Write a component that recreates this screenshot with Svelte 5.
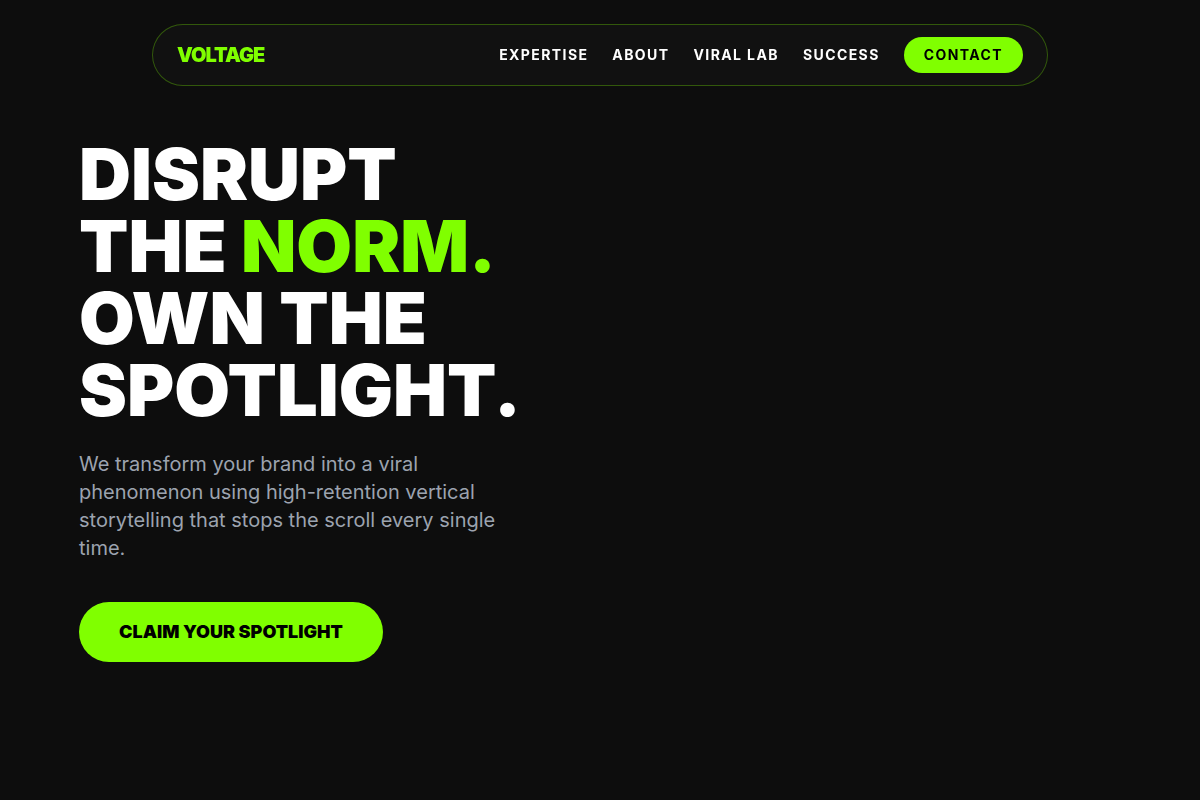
<script>
    const links = [
        { label: 'Expertise', href: '#expertise' },
        { label: 'About', href: '#about' },
        { label: 'Viral Lab', href: '#lab' },
        { label: 'Success', href: '#success' }
    ]
</script>

<nav>
    <a class="logo" href="#top">VOLTAGE</a>
    <div class="links">
        {#each links as link (link.href)}
            <a href={link.href}>{link.label}</a>
        {/each}
        <a class="contact" href="#contact">Contact</a>
    </div>
</nav>

<main id="top">
    <section class="hero">
        <div class="copy">
            <h1>Disrupt<br>the <span>norm.</span><br>Own the<br>Spotlight.</h1>
            <p>We transform your brand into a viral phenomenon using high-retention vertical storytelling that stops the scroll every single time.</p>
            <button type="button">Claim your spotlight</button>
        </div>
    </section>
</main>

<style>
    :global(body) {
        background: #0d0d0d;
        color: #fff;
        font-family: Inter, sans-serif;
    }
    nav {
        position: fixed;
        top: 24px;
        left: 0;
        right: 0;
        z-index: 10;
        box-sizing: border-box;
        width: calc(100% - 48px);
        max-width: 896px;
        margin: 0 auto;
        padding: 12px 24px;
        display: flex;
        align-items: center;
        justify-content: space-between;
        background: rgba(255, 255, 255, 0.02);
        border: 1px solid rgba(128, 255, 0, 0.3);
        border-radius: 32px;
    }
    nav a {
        color: #fff;
        text-decoration: none;
    }
    nav .logo {
        color: #80ff00;
        font-size: 20px;
        line-height: 28px;
        font-weight: 900;
        letter-spacing: -1px;
    }
    .links {
        display: flex;
        align-items: center;
        gap: 24px;
        font-size: 14px;
        line-height: 20px;
        font-weight: 700;
        letter-spacing: 1.4px;
        text-transform: uppercase;
    }
    .links .contact {
        padding: 8px 20px;
        background: #80ff00;
        color: #000;
        border-radius: 18px;
    }
    .hero {
        box-sizing: border-box;
        min-height: 100vh;
        padding: 0 79px;
        display: grid;
        grid-template-columns: 1fr 1fr;
        gap: 48px;
        align-items: center;
    }
    h1 {
        margin: 0 0 24px;
        font-size: 72px;
        line-height: 72px;
        font-weight: 900;
        text-transform: uppercase;
    }
    h1 span {
        color: #80ff00;
    }
    .copy p {
        max-width: 448px;
        margin: 0 0 40px;
        color: #9ca3af;
        font-size: 20px;
        line-height: 28px;
    }
    .copy button {
        padding: 16px 40px;
        border: 0;
        border-radius: 30px;
        background: #80ff00;
        color: #000;
        font-family: inherit;
        font-size: 18px;
        line-height: 28px;
        font-weight: 900;
        text-transform: uppercase;
        cursor: pointer;
    }
</style>
